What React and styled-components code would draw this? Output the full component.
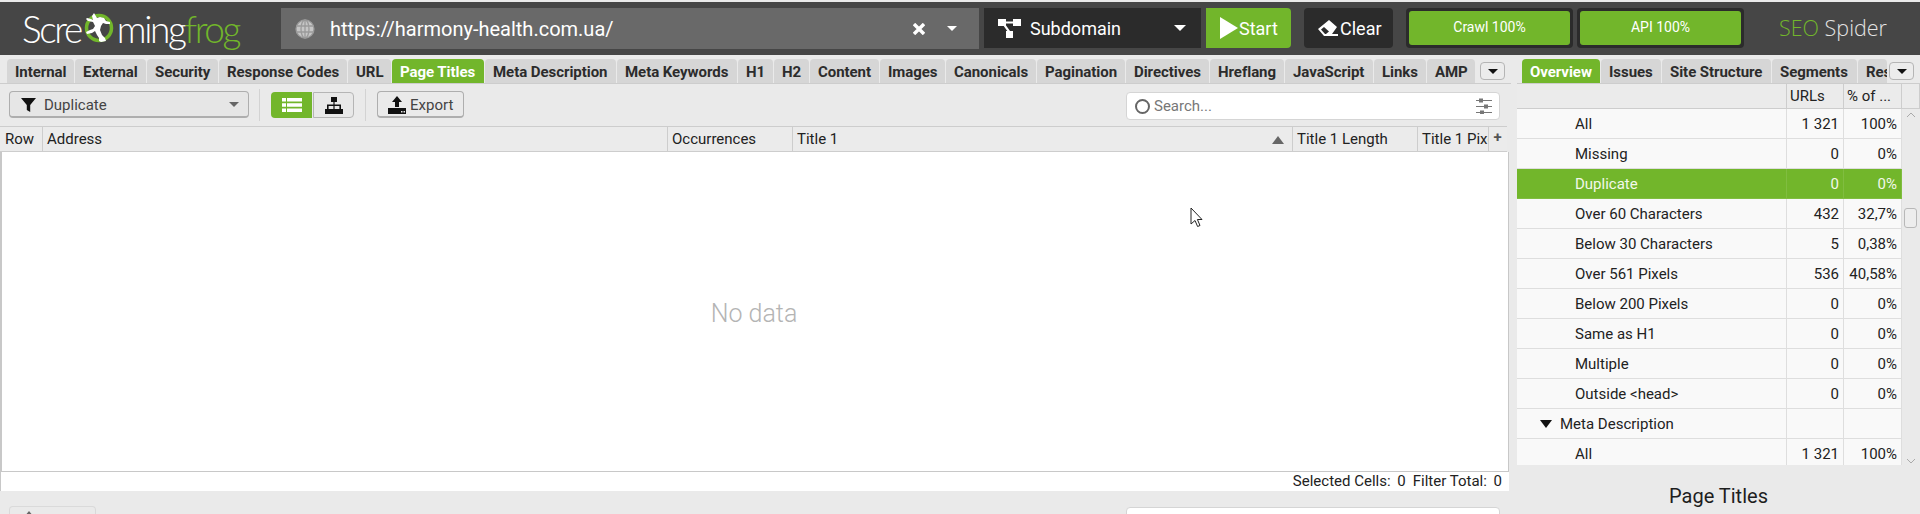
import React from 'react';
import styled, { createGlobalStyle } from 'styled-components';

const GlobalStyle = createGlobalStyle`
  html, body { margin: 0; padding: 0; background: #eaeaea; }
  * { box-sizing: border-box; }
  body { font-family: Roboto, "Liberation Sans", sans-serif; }
`;

const leftTabs = [
  ['Internal', 68], ['External', 72], ['Security', 72], ['Response Codes', 129], ['URL', 44],
  ['Page Titles', 93], ['Meta Description', 132], ['Meta Keywords', 121], ['H1', 36], ['H2', 36],
  ['Content', 70], ['Images', 66], ['Canonicals', 91], ['Pagination', 89], ['Directives', 84],
  ['Hreflang', 75], ['JavaScript', 89], ['Links', 53], ['AMP', 49],
];
const rightTabs = [['Overview', 79], ['Issues', 61], ['Site Structure', 110], ['Segments', 86], ['Response Codes', 30]];

const columns = [
  ['Row', 42], ['Address', 625], ['Occurrences', 125], ['Title 1', 500], ['Title 1 Length', 125], ['Title 1 Pixel Width', 71],
];

const rows = [
  { label: 'All', urls: '1 321', pct: '100%' },
  { label: 'Missing', urls: '0', pct: '0%' },
  { label: 'Duplicate', urls: '0', pct: '0%', selected: true },
  { label: 'Over 60 Characters', urls: '432', pct: '32,7%' },
  { label: 'Below 30 Characters', urls: '5', pct: '0,38%' },
  { label: 'Over 561 Pixels', urls: '536', pct: '40,58%' },
  { label: 'Below 200 Pixels', urls: '0', pct: '0%' },
  { label: 'Same as H1', urls: '0', pct: '0%' },
  { label: 'Multiple', urls: '0', pct: '0%' },
  { label: 'Outside <head>', urls: '0', pct: '0%' },
  { label: 'Meta Description', group: true },
  { label: 'All', urls: '1 321', pct: '100%' },
];

const Page = styled.div`
  width: 1920px;
  height: 514px;
  overflow: hidden;
  padding-top: 2px;
  background: #eaeaea;
`;

const Header = styled.header`
  height: 53px;
  background: #464646;
  display: flex;
  align-items: flex-start;
  padding: 6px 0 0 0;
`;

const Logo = styled.div`
  width: 281px;
  height: 41px;
  padding-left: 22px;
  display: flex;
  align-items: center;
  font-family: Lato, sans-serif;
  font-weight: 300;
  font-size: 37px;
  letter-spacing: -2.4px;
  color: #fff;
  span { color: #72b62b; }
  svg { margin: 0 2px 0 2px; flex: none; }
`;

const UrlBox = styled.div`
  width: 698px;
  height: 41px;
  background: #696969;
  color: #fff;
  display: flex;
  align-items: center;
  padding: 0 22px 0 14px;
  font-size: 20px;
  gap: 15px;
`;

const UrlText = styled.div`
  flex: 1;
`;

const UrlCaret = styled.div`
  margin-left: 7px;
`;

const DarkBox = styled.div`
  height: 40px;
  background: #2b2b2b;
  color: #fff;
  display: flex;
  align-items: center;
  font-size: 18px;
`;

const ScopeBox = styled(DarkBox)`
  width: 217px;
  margin-left: 5px;
  padding: 0 15px 0 13px;
  gap: 9px;
  span { flex: 1; }
`;

const StartButton = styled.div`
  width: 85px;
  height: 40px;
  margin-left: 5px;
  background: #72b62b;
  border-radius: 0 4px 4px 0;
  color: #fff;
  font-size: 18px;
  display: flex;
  align-items: center;
  padding-left: 13px;
  gap: 0;
`;

const ClearButton = styled(DarkBox)`
  width: 89px;
  margin-left: 13px;
  border-radius: 4px;
  padding-left: 13px;
  gap: 2px;
`;

const Meter = styled.div`
  width: 167px;
  height: 40px;
  margin-left: ${(p) => p.$gap}px;
  background: #2b2b2b;
  border-radius: 4px;
  padding: 3px;
`;

const MeterFill = styled.div`
  height: 100%;
  background: #72b62b;
  border-radius: 3px;
  color: #fff;
  font-size: 14px;
  display: flex;
  align-items: center;
  justify-content: center;
  padding-bottom: 2px;
`;

const Brand = styled.div`
  margin-left: 35px;
  height: 40px;
  line-height: 40px;
  font-family: "Open Sans", sans-serif;
  font-weight: 300;
  font-size: 21.5px;
  color: #e4e4e4;
  span { color: #72b62b; }
`;

const Panes = styled.div`
  display: grid;
  grid-template-columns: 1511px 1fr;
`;

const LeftPane = styled.section`
  width: 1511px;
  display: flex;
  flex-direction: column;
`;

const RightPane = styled.section`
  display: flex;
  flex-direction: column;
  padding-left: 6px;
`;

const TabBar = styled.div`
  height: 29px;
  padding: 4px 0 0 ${(p) => p.$left}px;
  display: flex;
  gap: 1px;
  border-bottom: 1px solid #cdcdcd;
  overflow: hidden;
  position: relative;
`;

const Tab = styled.div`
  flex: none;
  width: ${(p) => p.$w - 1}px;
  height: 24px;
  border-radius: 4px 4px 0 0;
  background: ${(p) => (p.$active ? '#72b62b' : '#d6d6d6')};
  color: ${(p) => (p.$active ? '#fff' : '#2c2c2c')};
  font-size: 15px;
  font-weight: 700;
  letter-spacing: -0.05px;
  line-height: 26px;
  padding-left: 8px;
  white-space: nowrap;
  overflow: hidden;
`;

const TabMenuButton = styled.div`
  position: absolute;
  top: 7px;
  right: ${(p) => p.$right}px;
  width: 25px;
  height: 18px;
  background: #ececec;
  border: 1px solid #b5b5b5;
  border-radius: 4px;
  display: flex;
  align-items: center;
  justify-content: center;
`;

const Caret = styled.i`
  display: block;
  width: 0;
  height: 0;
  border-left: ${(p) => p.$size}px solid transparent;
  border-right: ${(p) => p.$size}px solid transparent;
  border-top: ${(p) => p.$h || p.$size}px solid ${(p) => p.$color};
  flex: none;
`;

const Toolbar = styled.div`
  height: 42px;
  display: flex;
  align-items: flex-start;
  padding: 7px 11px 0 9px;
`;

const FilterSelect = styled.div`
  width: 240px;
  height: 27px;
  border: 1px solid #aeaeae;
  border-bottom-width: 2px;
  border-radius: 4px;
  background: #e6e6e6;
  display: flex;
  align-items: center;
  padding: 1px 9px 0 11px;
  gap: 8px;
  font-size: 15px;
  color: #444;
  span { flex: 1; }
`;

const ToolSeparator = styled.div`
  width: 1px;
  height: 32px;
  margin: -2px ${(p) => p.$right}px 0 10px;
  background: #d3d3d3;
`;

const ViewButton = styled.div`
  width: ${(p) => p.$w}px;
  height: 26px;
  margin: 1px 1px 0 0;
  border-radius: ${(p) => (p.$active ? '4px 0 0 4px' : '0 4px 4px 0')};
  background: ${(p) => (p.$active ? '#72b62b' : '#e8e8e8')};
  border: ${(p) => (p.$active ? '0' : '1px solid #b5b5b5')};
  display: flex;
  align-items: center;
  justify-content: center;
`;

const ExportButton = styled.div`
  width: 87px;
  height: 27px;
  border: 1px solid #aeaeae;
  border-bottom-width: 2px;
  border-radius: 4px;
  display: flex;
  align-items: center;
  padding: 1px 0 0 10px;
  gap: 4px;
  font-size: 15px;
  color: #444;
`;

const SearchBox = styled.div`
  width: 374px;
  height: 28px;
  margin: 1px 0 0 auto;
  background: #fff;
  border: 1px solid #d5d5d5;
  border-radius: 4px;
  display: flex;
  align-items: center;
  padding: 0 7px;
  gap: 3px;
  font-size: 15px;
  color: #777;
  span { flex: 1; }
`;

const TableHead = styled.div`
  height: 26px;
  margin-right: 4px;
  display: flex;
  background: #ebebeb;
  border-top: 1px solid #cdcdcd;
  border-bottom: 1px solid #cdcdcd;
  padding-left: 1px;
`;

const HeadCell = styled.div`
  width: ${(p) => p.$w}px;
  flex: none;
  border-right: 1px solid #cdcdcd;
  padding: 1px 0 0 4px;
  font-size: 15px;
  line-height: 25px;
  color: #222;
  white-space: nowrap;
  overflow: hidden;
  display: flex;
  align-items: center;
  justify-content: space-between;
`;

const PlusCell = styled.div`
  flex: none;
  width: 17px;
  text-align: center;
  font-size: 15px;
  font-weight: 700;
  line-height: 20px;
  color: #555;
`;

const SortMark = styled.i`
  display: block;
  width: 0;
  height: 0;
  margin-right: 8px;
  border-left: 6px solid transparent;
  border-right: 6px solid transparent;
  border-bottom: 8px solid #666;
`;

const TableBody = styled.div`
  height: 320px;
  margin-right: 2px;
  background: #fff;
  border-left: 2px solid #c8c8c8;
  border-right: 1px solid #c8c8c8;
  border-bottom: 1px solid #c8c8c8;
  display: flex;
  align-items: center;
  justify-content: center;
  font-size: 25px;
  font-weight: 300;
  color: #b4b4b4;
  position: relative;
  padding: 3px 2px 0 0;
`;

const CursorMark = styled.svg`
  position: absolute;
  left: 1188px;
  top: 55px;
`;

const StatusBar = styled.div`
  height: 19px;
  margin-right: 2px;
  background: #fff;
  border-left: 1px solid #c8c8c8;
  display: flex;
  justify-content: flex-end;
  gap: 7px;
  padding-right: 7px;
  font-size: 15px;
  line-height: 19px;
  color: #222;
  b { font-weight: 400; margin-left: 3px; }
`;

const LowerBar = styled.div`
  height: 23px;
  overflow: hidden;
  padding: 15px 11px 0 9px;
  display: flex;
  align-items: flex-start;
`;

const LowerExport = styled(ExportButton)`
  flex: none;
  border-color: #cfcfcf;
  opacity: 0.6;
`;

const OutlineHead = styled.div`
  height: 25px;
  display: grid;
  grid-template-columns: 270px 57px 58px 18px;
  background: #ebebeb;
  border-bottom: 1px solid #cdcdcd;
  font-size: 15px;
  line-height: 24px;
  color: #222;
`;

const OutlineHeadCell = styled.div`
  border-right: 1px solid #cdcdcd;
  padding-left: 3px;
  white-space: nowrap;
  overflow: hidden;
`;

const OutlineScroll = styled.div`
  height: 356px;
  position: relative;
  overflow: hidden;
`;

const OutlineRow = styled.div`
  height: 30px;
  width: 385px;
  display: grid;
  grid-template-columns: 270px 57px 58px;
  background: ${(p) => (p.$selected ? '#72b62b' : '#f9f9f9')};
  color: ${(p) => (p.$selected ? '#f2f8ea' : '#222')};
  border-bottom: 1px solid ${(p) => (p.$selected ? '#80bd40' : '#dedede')};
  font-size: 15px;
  line-height: 30px;
`;

const OutlineLabel = styled.div`
  padding-left: ${(p) => (p.$group ? 23 : 58)}px;
  border-right: 1px solid ${(p) => (p.$selected ? '#80bd40' : '#dedede')};
  display: flex;
  align-items: center;
  gap: 8px;
`;

const OutlineValue = styled.div`
  text-align: right;
  padding-right: 4px;
  border-right: 1px solid ${(p) => (p.$selected ? '#80bd40' : '#dedede')};
`;

const ScrollThumb = styled.div`
  position: absolute;
  right: 3px;
  top: 99px;
  width: 13px;
  height: 20px;
  background: #ededed;
  border: 1px solid #b8b8b8;
  border-radius: 3px;
`;

const ScrollArrow = styled.svg`
  position: absolute;
  right: 4px;
  ${(p) => (p.$down ? 'bottom: 1px;' : 'top: 3px;')}
`;

const PanelTitle = styled.div`
  height: 49px;
  padding-top: 19px;
  text-align: center;
  font-size: 20px;
  line-height: 24px;
  color: #1e1e1e;
`;

const FrogIcon = () => (
  <svg width="32" height="36" viewBox="0 0 32 36">
    <circle cx="16" cy="17" r="12.5" fill="none" stroke="#72b62b" strokeWidth="3.5" />
    <path fill="#fff" d="M11 2l3 5 3-1 4 1 2 3 4 1v2l-4 0-3-1-2 3-1 4 2 5 3 3 1 3-5 1-2-1v-3l-2-3-2-4-3 2-5 1-1-2 4-2 3-1 2-3-2-4-5-1-2-2 1-1 4 1 2 1-1-4z" />
  </svg>
);

const GlobeIcon = () => (
  <svg width="20" height="20" viewBox="0 0 20 20" fill="none" stroke="#9a9a9a" strokeWidth="1.3">
    <circle cx="10" cy="10" r="9" fill="#c6c6c6" />
    <ellipse cx="10" cy="10" rx="4" ry="9" />
    <path d="M10 1v18M1.5 7h17M1.5 13h17" />
  </svg>
);

const NetworkIcon = () => (
  <svg width="24" height="20" viewBox="0 0 24 20" fill="#fff">
    <rect x="1" y="1" width="8" height="7" />
    <rect x="16" y="1" width="8" height="7" />
    <rect x="9" y="13" width="7" height="7" />
    <path d="M8 3.5h9v2H8zM6 7l5 7 2-1-5-7z" />
  </svg>
);

const PlayIcon = () => (
  <svg width="20" height="24" viewBox="0 0 20 24" fill="#fff"><path d="M1 1l18 11L1 23z" /></svg>
);

const EraserIcon = () => (
  <svg width="21" height="18" viewBox="0 0 21 18" fill="#fff">
    <path d="M12 1l8 7-5 7h6v2H7L1 10z" />
    <path fill="#2b2b2b" d="M4 10.5L7 8l5 4.5-3 2.5H8z" />
  </svg>
);

const FunnelIcon = () => (
  <svg width="15" height="15" viewBox="0 0 15 15" fill="#111"><path d="M0 1h15L9.2 8v7l-3.4-2V8z" /></svg>
);

const ListIcon = () => (
  <svg width="20" height="14" viewBox="0 0 20 14" fill="#fff">
    <path d="M0 0h4v3.5H0zM5 0h15v3.5H5zM0 5.2h4v3.5H0zM5 5.2h15v3.5H5zM0 10.5h4V14H0zM5 10.5h15V14H5z" />
  </svg>
);

const TreeIcon = () => (
  <svg width="18" height="17" viewBox="0 0 18 17" fill="#111">
    <path d="M6 0h6v5H9.6v2.4H16V12h2v5h-6v-5h2.4V9H9.6v3H12v5H6v-5h2.4V9H3.6v3H6v5H0v-5h2V7.4h6.4V5H6z" />
  </svg>
);

const UploadIcon = () => (
  <svg width="18" height="18" viewBox="0 0 18 18" fill="#111">
    <path d="M9 0l5 6h-3v5H7V6H4z" />
    <path d="M0 12h18v6H0z" />
    <path fill="#e6e6e6" d="M13 15h1.5v1.5H13zM15.5 15H17v1.5h-1.5z" />
  </svg>
);

const SlidersIcon = () => (
  <svg width="16" height="16" viewBox="0 0 16 16" fill="#777">
    <path d="M0 2h16v1H0zM0 8h16v1H0zM0 14h16v1H0z" />
    <path d="M3 0.5h4v4H3zM8 6.5h4v4H8zM4 12.5h4v3.5H4z" />
  </svg>
);

const SearchRing = () => (
  <svg width="17" height="17" viewBox="0 0 17 17" fill="none" stroke="#666" strokeWidth="2">
    <circle cx="8.5" cy="8.5" r="6.5" />
  </svg>
);

const App = () => {
  return (
    <>
      <GlobalStyle />
      <Page>
        <Header>
          <Logo>
            Scre<FrogIcon />ming<span>frog</span>
          </Logo>
          <UrlBox>
            <GlobeIcon />
            <UrlText>https://harmony-health.com.ua/</UrlText>
            <svg width="12" height="12" viewBox="0 0 12 12" stroke="#fff" strokeWidth="3.4"><path d="M1 1l10 10M11 1L1 11" /></svg>
            <UrlCaret><Caret $size={5} $color="#fff" /></UrlCaret>
          </UrlBox>
          <ScopeBox>
            <NetworkIcon />
            <span>Subdomain</span>
            <Caret $size={6} $color="#fff" />
          </ScopeBox>
          <StartButton><PlayIcon />Start</StartButton>
          <ClearButton><EraserIcon />Clear</ClearButton>
          <Meter $gap={13}><MeterFill>Crawl 100%</MeterFill></Meter>
          <Meter $gap={4}><MeterFill>API 100%</MeterFill></Meter>
          <Brand><span>SEO</span> Spider</Brand>
        </Header>
        <Panes>
          <LeftPane>
            <TabBar $left={7}>
              {leftTabs.map(([name, w]) => (
                <Tab key={name} $w={w} $active={name === 'Page Titles'}>{name}</Tab>
              ))}
              <TabMenuButton $right={6}><Caret $size={5} $color="#111" /></TabMenuButton>
            </TabBar>
            <Toolbar>
              <FilterSelect>
                <FunnelIcon />
                <span>Duplicate</span>
                <Caret $size={5} $color="#666" />
              </FilterSelect>
              <ToolSeparator $right={11} />
              <ViewButton $active $w={41}><ListIcon /></ViewButton>
              <ViewButton $w={41}><TreeIcon /></ViewButton>
              <ToolSeparator $right={11} />
              <ExportButton><UploadIcon />Export</ExportButton>
              <SearchBox>
                <SearchRing />
                <span>Search...</span>
                <SlidersIcon />
              </SearchBox>
            </Toolbar>
            <TableHead>
              {columns.map(([name, w]) => (
                <HeadCell key={name} $w={w}>
                  {name}
                  {name === 'Title 1' && <SortMark />}
                </HeadCell>
              ))}
              <PlusCell>+</PlusCell>
            </TableHead>
            <TableBody>
              No data
              <CursorMark width="13" height="21" viewBox="0 0 13 21">
                <path d="M1 1v16l4-3.5 2.6 6 2.4-1-2.6-6H12z" fill="#fff" stroke="#222" strokeWidth="1" />
              </CursorMark>
            </TableBody>
            <StatusBar>
              <div>Selected Cells: <b>0</b></div>
              <div>Filter Total: <b>0</b></div>
            </StatusBar>
            <LowerBar>
              <LowerExport><UploadIcon />Export</LowerExport>
              <SearchBox>
                <SearchRing />
                <span>Search...</span>
              </SearchBox>
            </LowerBar>
          </LeftPane>
          <RightPane>
            <TabBar $left={5}>
              {rightTabs.map(([name, w]) => (
                <Tab key={name} $w={w} $active={name === 'Overview'}>{name}</Tab>
              ))}
              <TabMenuButton $right={6}><Caret $size={5} $color="#111" /></TabMenuButton>
            </TabBar>
            <OutlineHead>
              <OutlineHeadCell />
              <OutlineHeadCell>URLs</OutlineHeadCell>
              <OutlineHeadCell>% of ...</OutlineHeadCell>
              <OutlineHeadCell />
            </OutlineHead>
            <OutlineScroll>
              {rows.map((row, i) => (
                <OutlineRow key={i} $selected={row.selected}>
                  <OutlineLabel $group={row.group} $selected={row.selected}>
                    {row.group && <Caret $size={6} $h={8} $color="#111" />}
                    {row.label}
                  </OutlineLabel>
                  <OutlineValue $selected={row.selected}>{row.urls}</OutlineValue>
                  <OutlineValue $selected={row.selected}>{row.pct}</OutlineValue>
                </OutlineRow>
              ))}
              <ScrollArrow width="10" height="6" viewBox="0 0 10 6" fill="none" stroke="#aaa"><path d="M1 5l4-4 4 4" /></ScrollArrow>
              <ScrollThumb />
              <ScrollArrow $down width="10" height="6" viewBox="0 0 10 6" fill="none" stroke="#aaa"><path d="M1 1l4 4 4-4" /></ScrollArrow>
            </OutlineScroll>
            <PanelTitle>Page Titles</PanelTitle>
          </RightPane>
        </Panes>
      </Page>
    </>
  );
};

export default App;
